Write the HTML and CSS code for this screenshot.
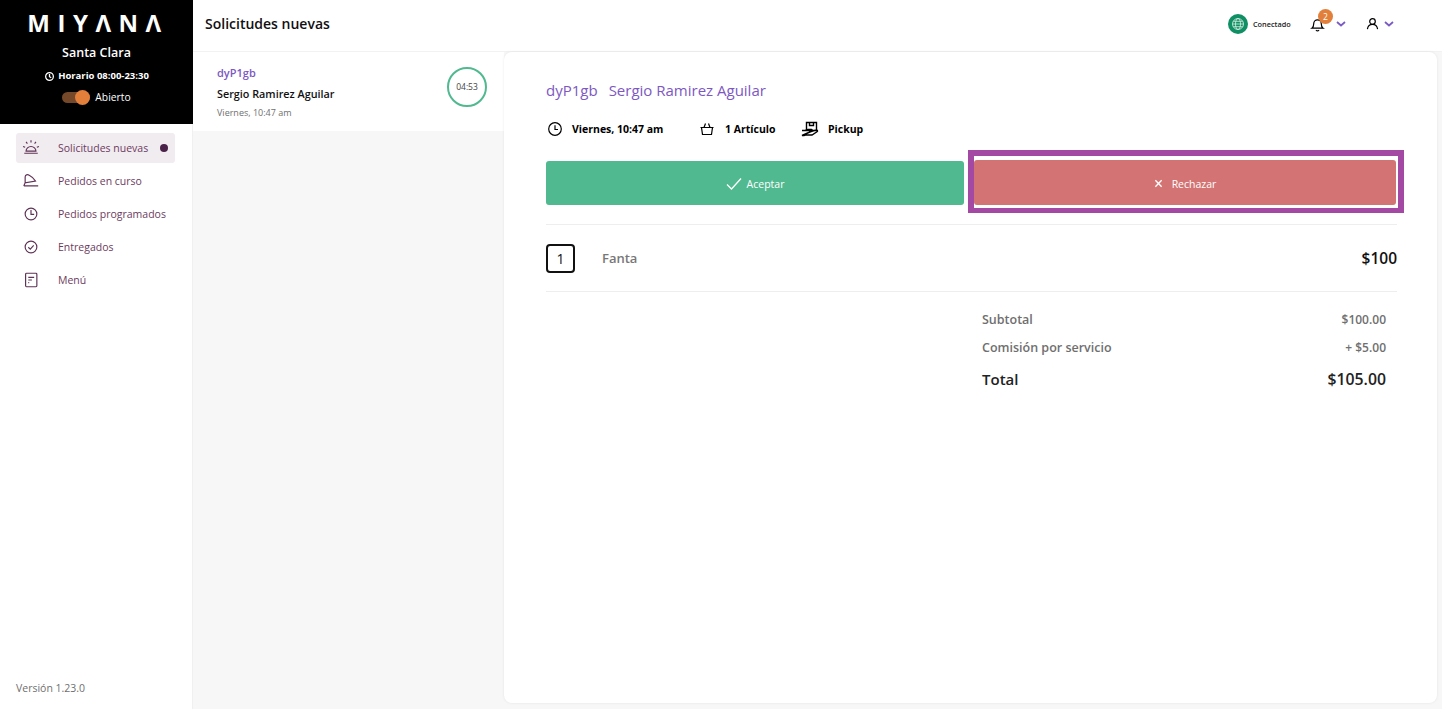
FILE: index.html
```html
<!DOCTYPE html>
<html lang="es">
<head>
    <meta charset="UTF-8">
    <meta name="viewport" content="width=device-width, initial-scale=1.0">
    <title>Miyana - Solicitudes nuevas</title>
    <link rel="stylesheet" href="styles.css">
</head>
<body>

<div class="app">
    <aside class="sidebar">
        <div class="brand">
            <div class="logo">MIYΛNΛ</div>
            <div class="branch">Santa Clara</div>
            <div class="hours">
                <svg class="hours-icon" viewBox="0 0 12 12"><circle cx="6" cy="6" r="4.2"/><path d="M6 3.400V6.200L7.900 7.400"/></svg>
                Horario 08:00-23:30
            </div>
            <div class="status">
                <span class="switch"><span class="knob"></span></span>
                Abierto
            </div>
        </div>

        <nav class="nav">
            <a class="nav-item active">
                <svg class="nav-icon" viewBox="0 0 20 20"><path d="M4.500 13.500a5.500 5.200 0 0 1 11 0zM2.500 15.800h15M10 1.500v2.500M4.500 3.300l1.500 1.800M15.500 3.300l-1.500 1.800M1.200 8.300l2.300.8M18.800 8.300l-2.300.8"/></svg>
                <span class="nav-label">Solicitudes nuevas</span>
                <span class="nav-dot"></span>
            </a>
            <a class="nav-item">
                <svg class="nav-icon" viewBox="0 0 20 20"><path d="M3.500 12V5.500C3.500 3 6 2.500 8 3.500c3 1.500 5.500 4 7 6.500zM2 15.500h16M3.500 12L2 15.500"/></svg>
                <span class="nav-label">Pedidos en curso</span>
            </a>
            <a class="nav-item">
                <svg class="nav-icon" viewBox="0 0 20 20"><circle cx="10" cy="10" r="6.500"/><path d="M10 5.500V10.500H13.500"/></svg>
                <span class="nav-label">Pedidos programados</span>
            </a>
            <a class="nav-item">
                <svg class="nav-icon" viewBox="0 0 20 20"><circle cx="10" cy="10" r="6.500"/><path d="M7 10.300l2.200 2 3.800-4"/></svg>
                <span class="nav-label">Entregados</span>
            </a>
            <a class="nav-item">
                <svg class="nav-icon" viewBox="0 0 20 20"><rect x="4" y="2.500" width="12.500" height="15" rx="1"/><path d="M7 7h6.500M7 10h4M7 13h1"/></svg>
                <span class="nav-label">Menú</span>
            </a>
        </nav>

        <div class="version">Versión 1.23.0</div>
    </aside>

    <div class="main">
        <header class="topbar">
            <h1 class="page-title">Solicitudes nuevas</h1>
            <div class="top-actions">
                <div class="connection">
                    <span class="globe">
                        <svg viewBox="0 0 14 14"><circle cx="7" cy="7" r="5.500"/><ellipse cx="7" cy="7" rx="2.500" ry="5.500"/><path d="M1.500 7h11M2.300 4.300h9.400M2.300 9.700h9.400"/></svg>
                    </span>
                    Conectado
                </div>
                <div class="bell">
                    <svg class="bell-icon" viewBox="0 0 16 16"><path d="M2 12.500c1.500-1 2-2.500 2-5a4 4 0 0 1 8 0c0 2.500.5 4 2 5zM6.300 14.500c.8.700 2.600.7 3.400 0"/></svg>
                    <span class="badge">2</span>
                    <svg class="chevron" viewBox="0 0 10 6"><path d="M1 1l4 3.500L9 1"/></svg>
                </div>
                <div class="user">
                    <svg class="user-icon" viewBox="0 0 14 14"><circle cx="7" cy="4.800" r="3"/><path d="M1.500 13c.5-3 2.500-5 5.500-5s5 2 5.500 5"/></svg>
                    <svg class="chevron" viewBox="0 0 10 6"><path d="M1 1l4 3.500L9 1"/></svg>
                </div>
            </div>
        </header>

        <div class="content">
            <section class="requests">
                <div class="request-card">
                    <div>
                        <div class="request-code">dyP1gb</div>
                        <div class="request-name">Sergio Ramirez Aguilar</div>
                        <div class="request-time">Viernes, 10:47 am</div>
                    </div>
                    <div class="timer">04:53</div>
                </div>
            </section>

            <section class="detail">
                <h2 class="detail-title"><span>dyP1gb</span><span>Sergio Ramirez Aguilar</span></h2>

                <div class="facts">
                    <div class="fact fact-time">
                        <svg class="fact-icon" viewBox="0 0 16 16"><circle cx="8" cy="8" r="6.300"/><path d="M8 4.200V8.500H11"/></svg>
                        Viernes, 10:47 am
                    </div>
                    <div class="fact fact-items">
                        <svg class="fact-icon" viewBox="0 0 16 16"><path d="M1.500 6.500h13M2.500 6.500l1 7h9l1-7M5 6.500l1.500-4M11 6.500l-1.500-4"/></svg>
                        1 Artículo
                    </div>
                    <div class="fact fact-pickup">
                        <svg class="fact-icon pickup-icon" viewBox="0 0 18 16"><path d="M5.500 1.500h10v8h-10zM8.500 1.500v3h4v-3M1 9.500h3l3-1h3.500c1 0 1 2 0 2H8M10 10.500l5-1.500c1.500-.3 2 1 1 1.800L11 14H4.500L3 14.500H1z"/></svg>
                        Pickup
                    </div>
                </div>

                <div class="actions">
                    <button class="btn btn-accept">
                        <svg class="check-icon" viewBox="0 0 16 14"><path d="M1 7.500l4.500 4.500L15 1.500"/></svg>
                        Aceptar
                    </button>
                    <div class="reject-frame">
                        <button class="btn btn-reject">
                            <svg class="x-icon" viewBox="0 0 10 10"><path d="M1.500 1.500l7 7M8.500 1.500l-7 7"/></svg>
                            Rechazar
                        </button>
                    </div>
                </div>

                <div class="item-row">
                    <span class="qty">1</span>
                    <span class="item-name">Fanta</span>
                    <span class="item-price">$100</span>
                </div>

                <div class="totals">
                    <div class="total-row"><span>Subtotal</span><span class="total-amount">$100.00</span></div>
                    <div class="total-row"><span>Comisión por servicio</span><span class="total-amount">+ $5.00</span></div>
                    <div class="total-row grand"><span>Total</span><span class="grand-amount">$105.00</span></div>
                </div>
            </section>
        </div>
    </div>
</div>

</body>
</html>
```

FILE: styles.css
```css
* {
    box-sizing: border-box;
}

body {
    margin: 0;
    height: 709px;
    overflow: hidden;
    font-family: "Open Sans", sans-serif;
    background-color: #fff;
    color: #111;
}

.app {
    display: flex;
    height: 709px;
}

/* Sidebar */
.sidebar {
    width: 193px;
    flex-shrink: 0;
    display: flex;
    flex-direction: column;
    border-right: 1px solid #f0f0f0;
}

.brand {
    height: 124px;
    margin-right: -1px;
    background-color: #000;
    color: #fff;
    display: flex;
    flex-direction: column;
    align-items: center;
    padding-top: 6px;
}

.logo {
    font-size: 24px;
    line-height: 33px;
    font-weight: 700;
    letter-spacing: 7.500px;
    margin-right: -3px;
}

.branch {
    font-size: 12.500px;
    font-weight: 600;
    line-height: 18px;
    margin-top: 5px;
}

.hours {
    display: flex;
    align-items: center;
    gap: 3px;
    font-size: 9.500px;
    font-weight: 700;
    line-height: 14px;
    margin-top: 7px;
}

.hours-icon {
    width: 11px;
    height: 11px;
    fill: none;
    stroke: #fff;
    stroke-width: 1.400;
}

.status {
    display: flex;
    align-items: center;
    gap: 5px;
    font-size: 10.300px;
    line-height: 16px;
    margin-top: 6px;
}

.switch {
    display: flex;
    justify-content: flex-end;
    align-items: center;
    width: 28px;
    height: 11px;
    border-radius: 6px;
    background-color: #75482a;
}

.knob {
    width: 15px;
    height: 15px;
    border-radius: 50%;
    background-color: #e27f3b;
}

.nav {
    display: flex;
    flex-direction: column;
    gap: 3px;
    padding: 9px 17px 0 16px;
}

.nav-item {
    display: flex;
    align-items: center;
    height: 30px;
    padding-left: 6px;
    border-radius: 3px;
    color: #6d3b60;
    font-size: 10.500px;
}

.nav-item.active {
    background-color: #f1ecf0;
}

.nav-icon {
    width: 18px;
    height: 18px;
    fill: none;
    stroke: #5f3255;
    stroke-width: 1.300;
    flex-shrink: 0;
}

.nav-label {
    margin-left: 18px;
    white-space: nowrap;
}

.nav-dot {
    width: 8px;
    height: 8px;
    margin-left: auto;
    margin-right: 7px;
    border-radius: 50%;
    background-color: #4a2148;
}

.version {
    margin-top: auto;
    padding: 0 0 13px 16px;
    font-size: 10.500px;
    line-height: 15px;
    color: #6f6f6f;
}

/* Top bar */
.main {
    flex: 1;
    min-width: 0;
    display: flex;
    flex-direction: column;
}

.topbar {
    height: 52px;
    flex-shrink: 0;
    display: flex;
    align-items: center;
    justify-content: space-between;
    padding: 0 48px 4px 12px;
    border-bottom: 1px solid #f2f2f2;
}

.page-title {
    margin: 0;
    font-size: 14px;
    font-weight: 600;
}

.top-actions {
    display: flex;
    align-items: center;
}

.connection {
    display: flex;
    align-items: center;
    gap: 5px;
    font-size: 7.300px;
    font-weight: 600;
    color: #222;
    width: 82px;
}

.globe {
    display: flex;
    align-items: center;
    justify-content: center;
    width: 20px;
    height: 20px;
    border-radius: 50%;
    background-color: #0f8f63;
}

.globe svg {
    width: 14px;
    height: 14px;
    fill: none;
    stroke: #d9f0e6;
    stroke-width: 0.800;
}

.bell {
    position: relative;
    display: flex;
    align-items: center;
    gap: 11px;
    width: 56px;
}

.bell-icon {
    width: 15px;
    height: 16px;
    fill: none;
    stroke: #000;
    stroke-width: 1.300;
}

.badge {
    position: absolute;
    left: 8px;
    top: -7px;
    width: 15px;
    height: 15px;
    border-radius: 50%;
    background-color: #e27f3b;
    color: #fff;
    font-size: 8.500px;
    line-height: 15px;
    text-align: center;
}

.chevron {
    width: 10px;
    height: 6px;
    fill: none;
    stroke: #7a5bc4;
    stroke-width: 1.800;
}

.user {
    display: flex;
    align-items: center;
    gap: 5px;
}

.user-icon {
    width: 13px;
    height: 13px;
    fill: none;
    stroke: #000;
    stroke-width: 1.300;
}

/* Lists and detail */
.content {
    flex: 1;
    min-height: 0;
    display: flex;
    background-color: #f7f7f7;
    padding-bottom: 6px;
    padding-right: 5px;
}

.requests {
    width: 311px;
    flex-shrink: 0;
}

.request-card {
    height: 79px;
    padding: 13px 17px 0 24px;
    background-color: #fff;
    display: flex;
    justify-content: space-between;
}

.request-code {
    font-size: 11px;
    font-weight: 600;
    line-height: 16px;
    color: #7d58c2;
}

.request-name {
    font-size: 10.800px;
    font-weight: 600;
    line-height: 16px;
    margin-top: 5px;
}

.request-time {
    font-size: 9px;
    line-height: 13px;
    margin-top: 4px;
    color: #6f6f6f;
}

.timer {
    width: 40px;
    height: 40px;
    margin-top: 2px;
    border: 2px solid #50b98f;
    border-radius: 50%;
    font-size: 8.500px;
    line-height: 36px;
    text-align: center;
    color: #444;
}

.detail {
    flex: 1;
    min-width: 0;
    background-color: #fff;
    border-radius: 8px;
    padding: 28px 40px 0 42px;
    box-shadow: 0 0 3px rgba(0, 0, 0, 0.08);
}

.detail-title {
    display: flex;
    gap: 11px;
    margin: 0;
    font-size: 15px;
    font-weight: 400;
    line-height: 20px;
    color: #7d58c2;
}

.facts {
    display: flex;
    height: 20px;
    margin-top: 19px;
    font-size: 10.500px;
    font-weight: 700;
    color: #000;
}

.fact {
    display: flex;
    align-items: center;
    gap: 10px;
}

.fact-time {
    width: 153px;
    padding-left: 1px;
    gap: 9px;
}

.fact-items {
    width: 102px;
}

.fact-pickup {
    gap: 9px;
}

.fact-icon {
    width: 16px;
    height: 16px;
    fill: none;
    stroke: #000;
    stroke-width: 1.200;
}

.pickup-icon {
    width: 18px;
    stroke-width: 1.400;
}

.actions {
    display: flex;
    align-items: flex-start;
    gap: 4px;
    margin-top: 11px;
    margin-right: -7px;
}

.btn {
    display: flex;
    align-items: center;
    justify-content: center;
    border: none;
    border-radius: 3px;
    font-family: inherit;
    font-size: 10.500px;
    color: #fff;
    padding: 2px 0 0;
}

.btn-accept {
    flex: 0 0 418px;
    height: 44px;
    margin-top: 11px;
    background-color: #50b98f;
    gap: 5px;
}

.reject-frame {
    flex: 1;
    height: 63px;
    padding: 4px 2px 3px 0;
    border: 6px solid #a349a4;
    border-bottom-width: 5px;
    background-color: #fff;
}

.btn-reject {
    width: 100%;
    height: 45px;
    background-color: #d47373;
    gap: 9px;
}

.check-icon {
    width: 16px;
    height: 14px;
    fill: none;
    stroke: #fff;
    stroke-width: 1.300;
}

.x-icon {
    width: 9px;
    height: 9px;
    fill: none;
    stroke: #fff;
    stroke-width: 1.500;
}

.item-row {
    display: flex;
    align-items: center;
    height: 68px;
    margin-top: 11px;
    border-top: 1px solid #eee;
    border-bottom: 1px solid #eee;
}

.qty {
    width: 29px;
    height: 29px;
    border: 2px solid #111;
    border-radius: 4px;
    font-size: 14px;
    line-height: 25px;
    text-align: center;
}

.item-name {
    margin-left: 27px;
    font-size: 13px;
    font-weight: 600;
    color: #777;
}

.item-price {
    margin-left: auto;
    font-size: 15.500px;
    font-weight: 600;
}

.totals {
    width: 415px;
    margin-left: auto;
    padding: 13px 11px 0 0;
}

.total-row {
    display: flex;
    justify-content: space-between;
    align-items: center;
    height: 28px;
    font-size: 12.500px;
    font-weight: 600;
    color: #6f6f6f;
}

.total-amount {
    font-size: 12px;
}

.total-row.grand {
    margin-top: 4px;
    font-size: 15px;
    color: #222;
}

.grand-amount {
    font-size: 15.800px;
}
```
